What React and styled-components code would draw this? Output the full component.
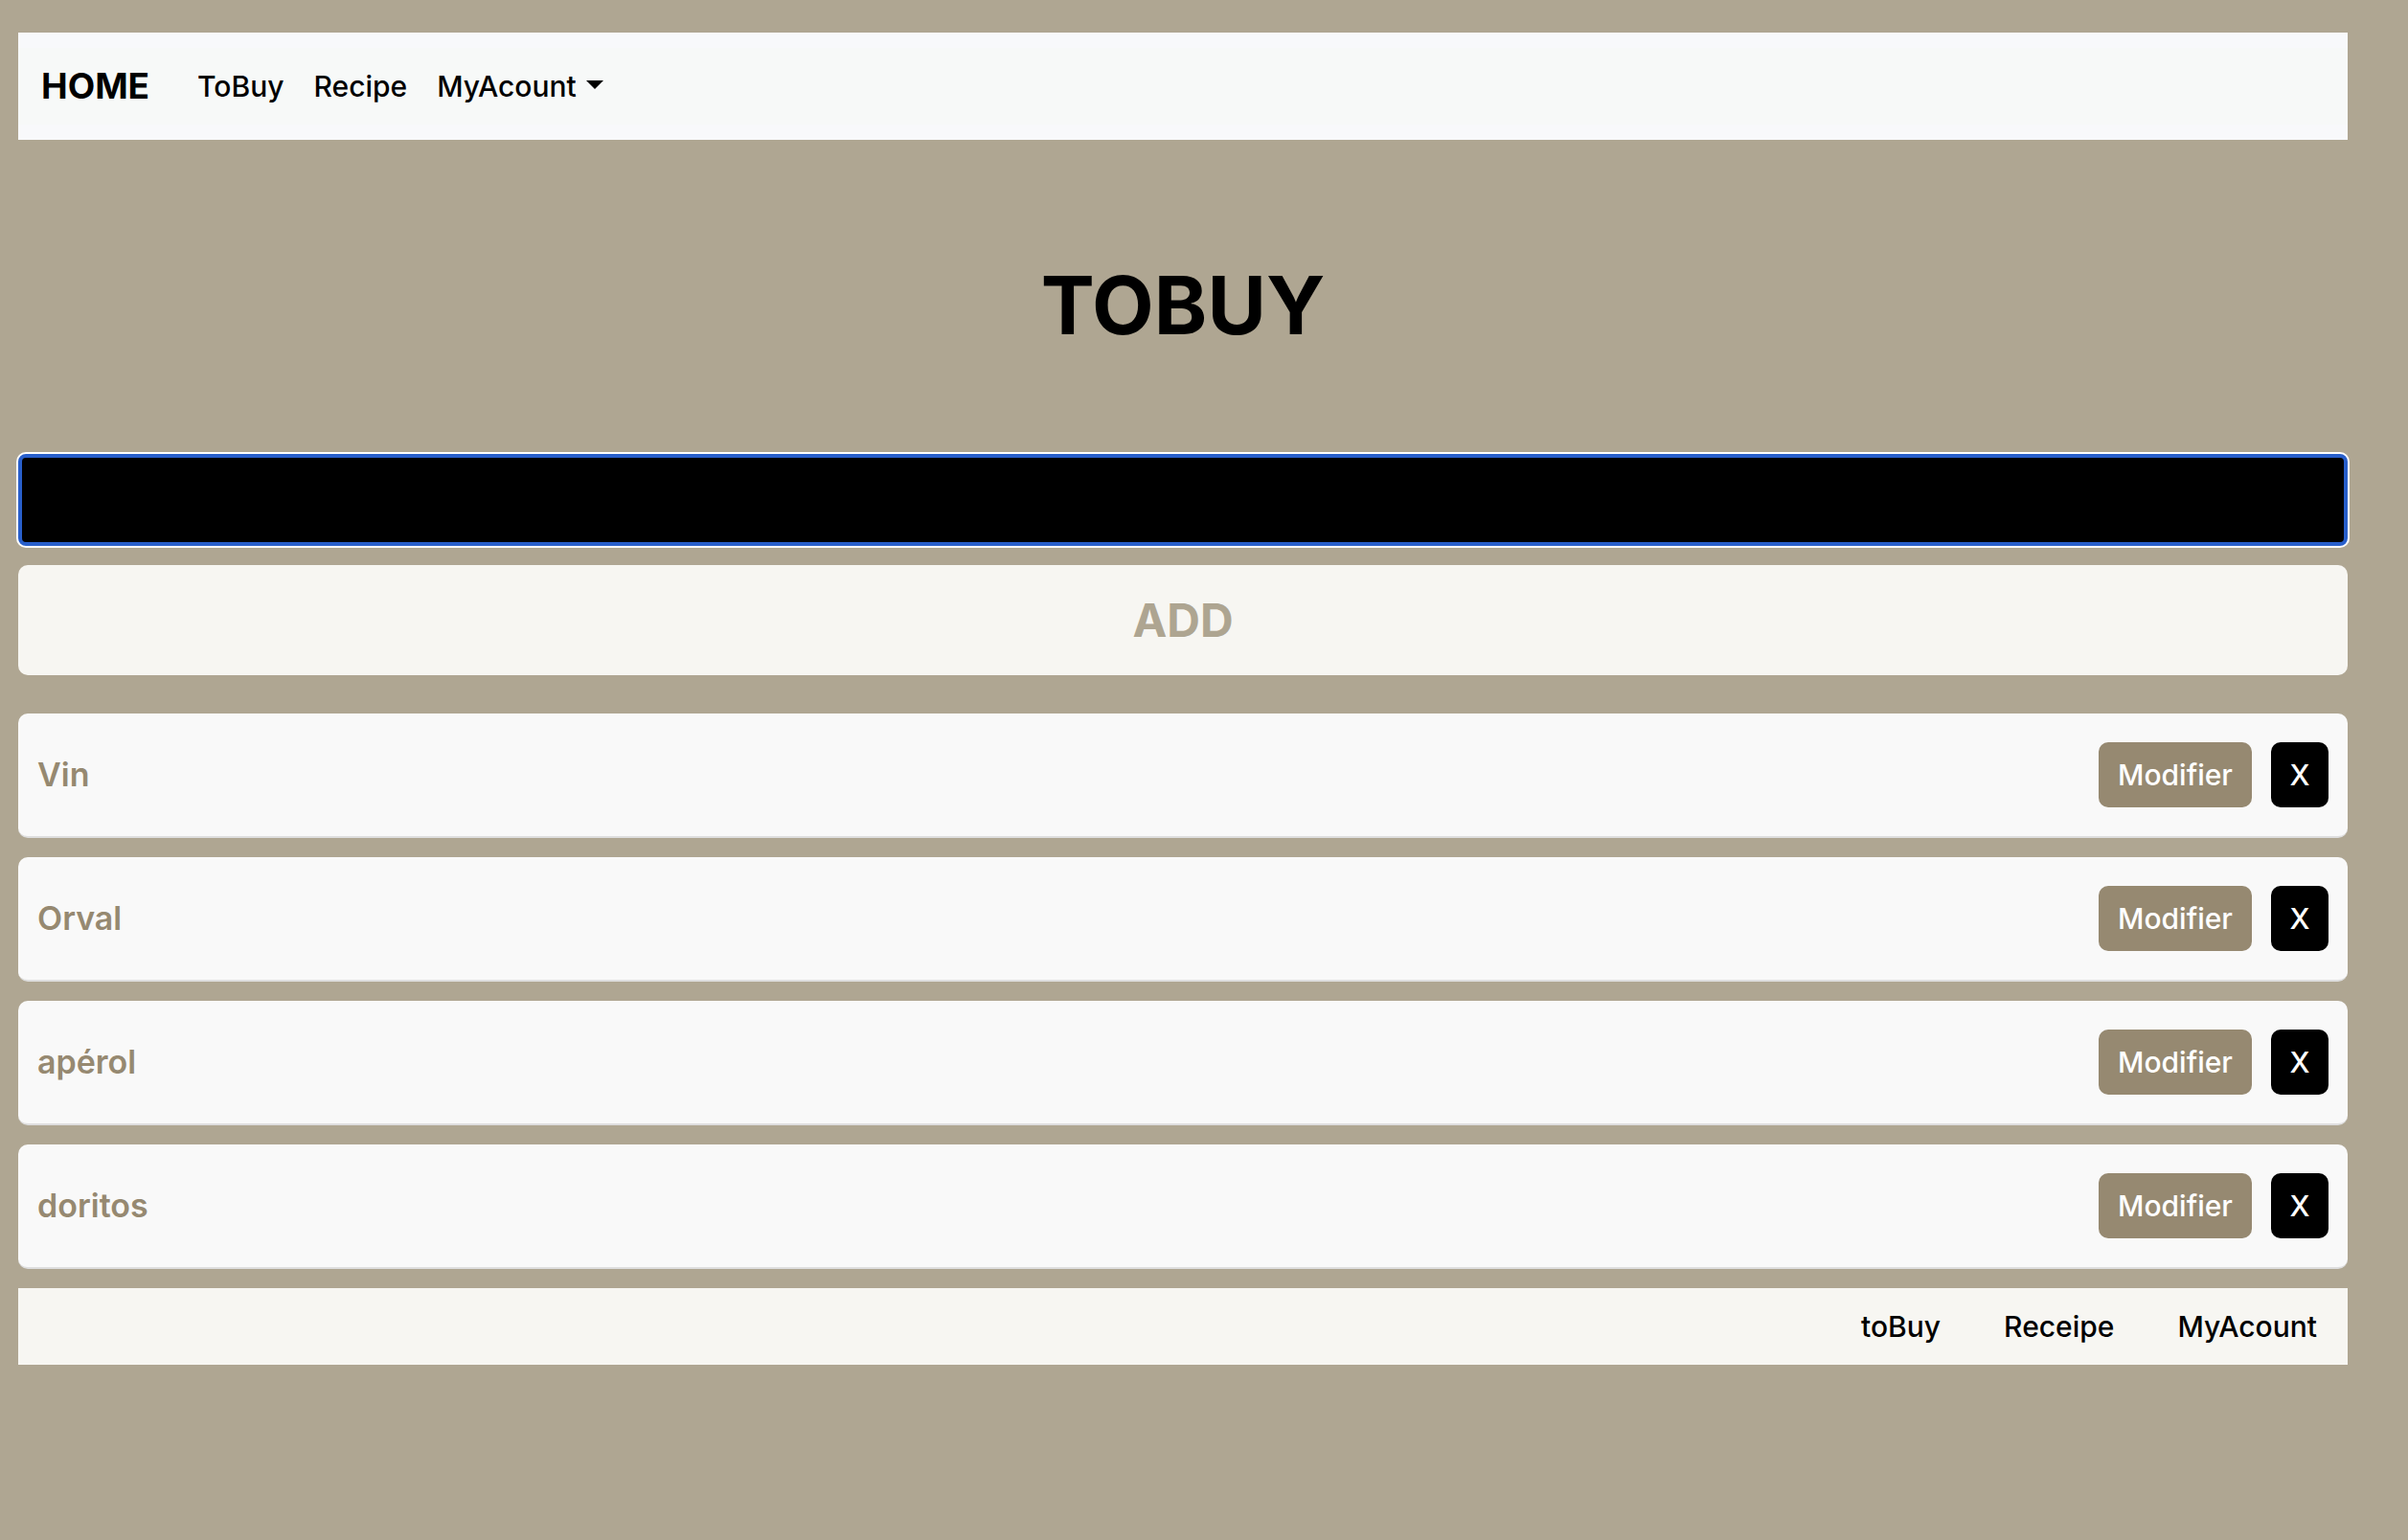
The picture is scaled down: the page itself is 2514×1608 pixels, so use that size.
import React from "react";
import styled, { createGlobalStyle } from "styled-components";

const GlobalStyle = createGlobalStyle`
  *, *::before, *::after { box-sizing: border-box; }
  body {
    margin: 0;
    background: #afa692;
    color: #000;
    font-family: Inter, "Liberation Sans", sans-serif;
  }
`;

const Page = styled.div`
  padding: 34px 63px 34px 19px;
`;

const Navbar = styled.nav`
  padding: 16px 0;
  background: #f8f9fb;
`;

const NavbarInner = styled.div`
  display: flex;
  align-items: center;
  gap: 50px;
  padding: 16px 24px;
  background: #f7f9f8;
`;

const Brand = styled.a`
  color: #000;
  font-size: 37px;
  line-height: 48px;
  font-weight: 700;
  text-decoration: none;
`;

const NavLinks = styled.div`
  display: flex;
  align-items: center;
  gap: 31px;
`;

const NavLink = styled.a`
  color: #000;
  font-size: 30px;
  line-height: 48px;
  font-weight: 500;
  text-decoration: none;
`;

const MenuButton = styled.button`
  display: flex;
  align-items: center;
  gap: 10px;
  padding: 0;
  border: 0;
  background: none;
  color: #000;
  font: 500 30px/48px Inter, "Liberation Sans", sans-serif;

  &::after {
    content: "";
    margin-bottom: 3px;
    border-top: 9px solid #000;
    border-left: 9px solid transparent;
    border-right: 9px solid transparent;
  }
`;

const Title = styled.h1`
  margin: 113px 0 95px;
  font-size: 84px;
  line-height: 120px;
  font-weight: 700;
  text-align: center;
`;

const Form = styled.form`
  display: flex;
  flex-direction: column;
  gap: 20px;
  margin-bottom: 40px;
`;

const ItemInput = styled.input`
  height: 96px;
  padding: 0 16px;
  border: 4px solid #285fcb;
  border-radius: 8px;
  outline: 0;
  box-shadow: 0 0 0 2px #fff;
  background: #000;
  color: #fff;
  font: 500 30px/48px Inter, "Liberation Sans", sans-serif;
`;

const AddButton = styled.button`
  padding: 28px 20px 27px;
  border: 0;
  border-radius: 10px;
  background: #f7f6f2;
  color: #aea591;
  font: 700 48px/60px Inter, "Liberation Sans", sans-serif;
`;

const List = styled.ul`
  display: flex;
  flex-direction: column;
  gap: 20px;
  margin: 0 0 20px;
  padding: 0;
  list-style: none;
`;

const Item = styled.li`
  display: flex;
  align-items: center;
  gap: 20px;
  padding: 30px 20px;
  border-bottom: 2px solid #dedede;
  border-radius: 10px;
  background: #f9f9f9;
`;

const ItemName = styled.span`
  flex: 1;
  color: #968971;
  font-size: 34px;
  line-height: 48px;
  font-weight: 600;
`;

const ItemButton = styled.button`
  min-width: ${(p) => (p.$wide ? "160px" : "60px")};
  padding: 10px 0;
  border: 0;
  border-radius: 10px;
  background: ${(p) => (p.$wide ? "#968971" : "#000")};
  color: #fff;
  font: 500 30px/48px Inter, "Liberation Sans", sans-serif;
`;

const Footer = styled.footer`
  display: flex;
  justify-content: flex-end;
  gap: 66px;
  padding: 16px 32px;
  background: #f7f6f2;
`;

const items = ["Vin", "Orval", "apérol", "doritos"];

export default function App() {
  return (
    <>
      <GlobalStyle />
      <Page>
        <Navbar>
          <NavbarInner>
            <Brand href="#home">HOME</Brand>
            <NavLinks>
              <NavLink href="#tobuy">ToBuy</NavLink>
              <NavLink href="#recipe">Recipe</NavLink>
              <MenuButton type="button" aria-haspopup="menu">MyAcount</MenuButton>
            </NavLinks>
          </NavbarInner>
        </Navbar>
        <main>
          <Title>TOBUY</Title>
          <Form onSubmit={(e) => e.preventDefault()}>
            <ItemInput type="text" aria-label="Item" />
            <AddButton type="submit">ADD</AddButton>
          </Form>
          <List>
            {items.map((name) => (
              <Item key={name}>
                <ItemName>{name}</ItemName>
                <ItemButton type="button" $wide>Modifier</ItemButton>
                <ItemButton type="button">X</ItemButton>
              </Item>
            ))}
          </List>
        </main>
        <Footer>
          <NavLink href="#tobuy">toBuy</NavLink>
          <NavLink href="#recipe">Receipe</NavLink>
          <NavLink href="#account">MyAcount</NavLink>
        </Footer>
      </Page>
    </>
  );
}
